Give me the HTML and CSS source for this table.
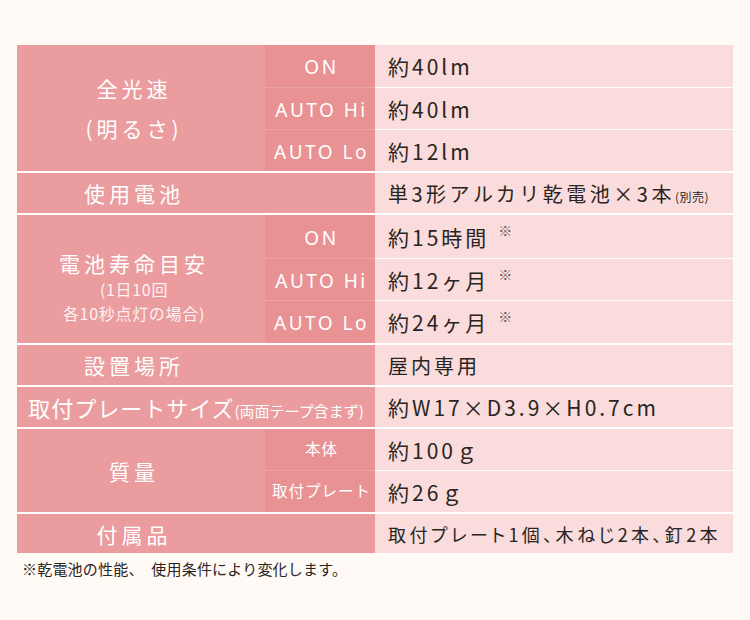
FILE: index.html
```html
<!DOCTYPE html>
<html lang="ja">
<head>
<meta charset="utf-8">
<link rel="stylesheet" href="styles.css">
</head>
<body>
<div class="spec">
  <div class="group g1">
    <div class="label tall"><span>全光速</span><span>(明るさ)</span></div>
    <div class="sub">ON</div><div class="val big">約40lm</div>
    <div class="sub">AUTO Hi</div><div class="val big">約40lm</div>
    <div class="sub">AUTO Lo</div><div class="val big">約12lm</div>
  </div>
  <div class="group g2">
    <div class="label">使用電池</div>
    <div class="sub blank"></div>
    <div class="val wide-sp">単3形アルカリ乾電池×3本<small class="tiny">(別売)</small></div>
  </div>
  <div class="group g3">
    <div class="label life"><span>電池寿命目安</span><small>(1日10回</small><small>各10秒点灯の場合)</small></div>
    <div class="sub">ON</div><div class="val big">約15時間<sup>※</sup></div>
    <div class="sub">AUTO Hi</div><div class="val big">約12ヶ月<sup>※</sup></div>
    <div class="sub">AUTO Lo</div><div class="val big">約24ヶ月<sup>※</sup></div>
  </div>
  <div class="group g2">
    <div class="label">設置場所</div>
    <div class="sub blank"></div>
    <div class="val">屋内専用</div>
  </div>
  <div class="group g2">
    <div class="label wide">取付プレートサイズ<small>(両面テープ含まず)</small></div>
    <div class="val big">約W17×D3.9×H0.7cm</div>
  </div>
  <div class="group g6">
    <div class="label">質量</div>
    <div class="sub small">本体</div><div class="val big">約100ｇ</div>
    <div class="sub small">取付プレート</div><div class="val big">約26ｇ</div>
  </div>
  <div class="group g7">
    <div class="label">付属品</div>
    <div class="sub blank"></div>
    <div class="val acc">取付プレート1個、木ねじ2本、釘2本</div>
  </div>
</div>
<p class="note">※乾電池の性能、　使用条件により変化します。</p>
</body>
</html>
```
FILE: styles.css
```css
html, body {
  margin: 0;
  padding: 0;
  background: #fffaf6;
}
body {
  font-family: "Noto Sans CJK JP", "Noto Sans", sans-serif;
  width: 750px;
  height: 620px;
  overflow: hidden;
}
.spec {
  margin: 45px 0 0 17px;
  width: 716px;
  display: flex;
  flex-direction: column;
  gap: 2px;
  background: #ffffff;
}
.group {
  display: grid;
  grid-template-columns: 248px 110px 358px;
}
.g1 { grid-template-rows: 42px 42px 42px; }
.g2 { grid-template-rows: 40px; }
.g3 { grid-template-rows: 43px 42px 43px; }
.g6 { grid-template-rows: 41px 42px; }
.g7 { grid-template-rows: 39px; }

.label {
  grid-column: 1;
  grid-row: 1 / -1;
  background: #ea9c9e;
  color: #fff;
  font-size: 21px;
  letter-spacing: 4px;
  display: flex;
  flex-direction: column;
  align-items: center;
  justify-content: center;
  padding-right: 14px;
  box-sizing: border-box;
  white-space: nowrap;
}
.label.tall { line-height: 40px; }
.label.life { padding-top: 16px; }
.label.life span { line-height: 28px; }
.label.life small {
  font-size: 16px;
  letter-spacing: 0.7px;
  line-height: 24px;
  color: #fdf1f1;
}
.label.wide {
  grid-column: 1 / 3;
  padding-right: 0;
  display: block;
  text-align: center;
  line-height: 40px;
  letter-spacing: 1px;
  font-size: 22px;
}
.label.wide small {
  font-size: 15px;
  letter-spacing: 0;
}
.sub {
  grid-column: 2;
  background: #e89294;
  color: #fff;
  font-family: "Noto Sans", "Noto Sans CJK JP", sans-serif;
  font-size: 19px;
  letter-spacing: 2.5px;
  display: flex;
  align-items: center;
  justify-content: center;
  padding: 2px 0 0 3px;
  box-sizing: border-box;
  white-space: nowrap;
}
.sub + .val + .sub { border-top: 1px solid #eba3a4; }
.sub.blank { background: #ea9c9e; }
.sub.small {
  font-family: "Noto Sans CJK JP", sans-serif;
  font-size: 15.5px;
  letter-spacing: 1px;
  padding: 0 0 4px 3px;
}
.val {
  grid-column: 3;
  background: #f9dcdb;
  color: #2a2422;
  font-size: 20px;
  letter-spacing: 3px;
  display: flex;
  align-items: center;
  padding-left: 13px;
  box-sizing: border-box;
  white-space: nowrap;
}
.val.big { font-size: 21px; }
.val.wide-sp { letter-spacing: 3.5px; }
.val.acc {
  font-size: 18px;
  letter-spacing: 3.4px;
  font-feature-settings: "palt";
}
.val + .sub + .val { border-top: 1px solid #ffffff; }
.tiny {
  font-size: 12px;
  letter-spacing: 0.5px;
  align-self: center;
  margin-top: 6px;
}
.val sup {
  font-size: 14px;
  align-self: flex-start;
  margin: 8px 0 0 9px;
  line-height: 14px;
  color: #555;
}
.note {
  margin: 6px 0 0 22px;
  font-size: 15px;
  line-height: 20px;
  color: #2a2422;
  letter-spacing: 0.2px;
}
```
